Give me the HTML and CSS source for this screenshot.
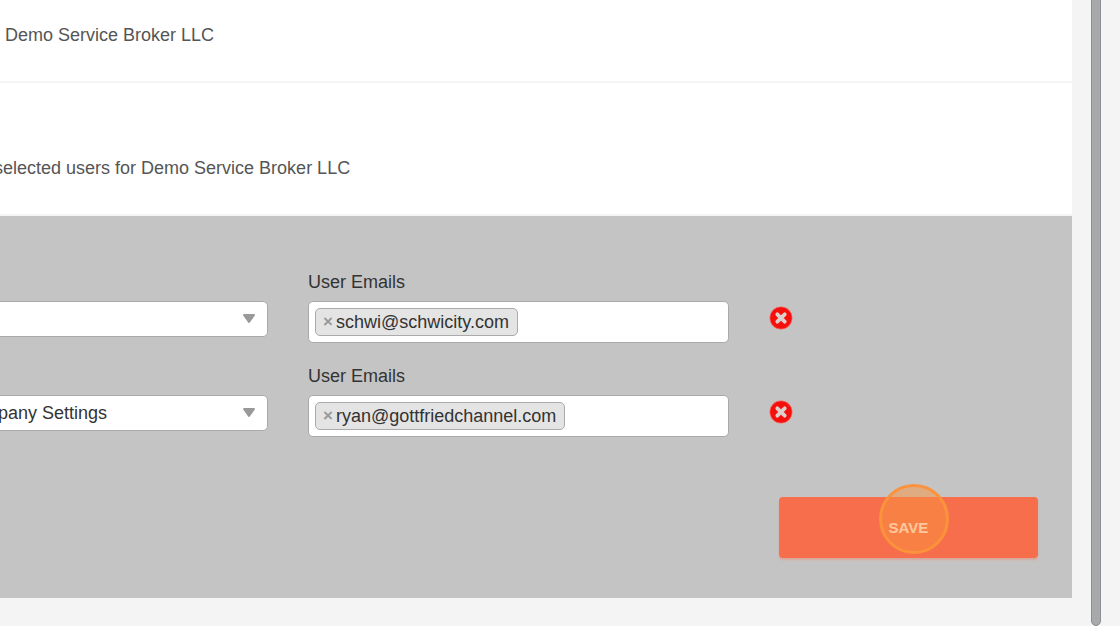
FILE: index.html
```html
<!DOCTYPE html>
<html lang="en">
  <head>
    <meta charset="utf-8">
    <title>Demo Service Broker LLC</title>
    <link rel="stylesheet" href="styles.css">
  </head>
  <body>
    <main>
      <section class="row">
        <p class="first">Demo Service Broker LLC</p>
      </section>
      <section class="row">
        <p>selected users for Demo Service Broker LLC</p>
      </section>
      <form class="panel">
        <div class="rule">
          <select class="setting" aria-label="Setting">
            <option></option>
          </select>
          <label for="emails1">User Emails</label>
          <div class="emails">
            <span class="tag"><button type="button">×</button>schwi@schwicity.com</span>
            <input id="emails1" type="text">
          </div>
          <button class="remove" type="button" aria-label="Remove">
            <svg viewBox="0 0 24 24">
              <circle cx="12" cy="12" r="11.2" fill="#f5100c" stroke="#f58580" stroke-width=".6" />
              <path d="M8.3 8.3l7.4 7.4M15.7 8.3l-7.4 7.4" stroke="#ddd0cc" stroke-width="3.8" stroke-linecap="round" />
            </svg>
          </button>
        </div>
        <div class="rule">
          <select class="setting" aria-label="Setting">
            <option>pany Settings</option>
          </select>
          <label for="emails2">User Emails</label>
          <div class="emails">
            <span class="tag"><button type="button">×</button>ryan@gottfriedchannel.com</span>
            <input id="emails2" type="text">
          </div>
          <button class="remove" type="button" aria-label="Remove">
            <svg viewBox="0 0 24 24">
              <circle cx="12" cy="12" r="11.2" fill="#f5100c" stroke="#f58580" stroke-width=".6" />
              <path d="M8.3 8.3l7.4 7.4M15.7 8.3l-7.4 7.4" stroke="#ddd0cc" stroke-width="3.8" stroke-linecap="round" />
            </svg>
          </button>
        </div>
        <button class="save" type="submit">SAVE<span class="click"></span></button>
      </form>
    </main>
    <div class="scroll"></div>
  </body>
</html>
```

FILE: styles.css
```css
* { box-sizing: border-box; }
body {
  display: flex;
  min-height: 100vh;
  margin: 0;
  overflow: hidden;
  background-color: #f4f4f4;
  color: #333;
  font: 18px/22px "Liberation Sans", Arial, sans-serif;
}
button, input, select { font: inherit; }
button { border: 0; padding: 0; cursor: pointer; }

/* content runs off the left edge of the window */
main {
  flex: 1;
  margin-left: -8px;
}
.row {
  background-color: #fff;
  border-bottom: 2px solid #f4f4f4;
  padding: 74px 0 35px 2px;
}
.row:first-child { padding: 24px 0 35px 13px; }
.row p {
  margin: 0;
  color: #555;
}

.panel {
  display: flex;
  flex-direction: column;
  gap: 22px;
  padding: 55px 0 40px;
  background-color: #c4c4c4;
}
.rule {
  display: grid;
  grid-template-columns: 276fr 421fr 303fr;
  gap: 8px 40px;
  align-items: start;
}
.rule label { grid-area: 1 / 2; }
.setting {
  grid-area: 2 / 1;
  appearance: none;
  width: 100%;
  height: 36px;
  padding: 0 40px 0 5px;
  border: 1px solid #aaa;
  border-radius: 5px;
  color: #333;
  background: #fff url("data:image/svg+xml,%3Csvg xmlns='http://www.w3.org/2000/svg' viewBox='0 0 14 10'%3E%3Cpath d='M2 1h10L7 8z' fill='%23999' stroke='%23999' stroke-width='2' stroke-linejoin='round'/%3E%3C/svg%3E") no-repeat right 11px top 12px / 14px 10px;
}
.emails {
  grid-area: 2 / 2;
  display: flex;
  gap: 5px;
  min-width: 0;
  padding: 6px;
  background-color: #fff;
  border: 1px solid #aaa;
  border-radius: 5px;
}
.emails input {
  flex: 1;
  min-width: 0;
  padding: 0;
  border: 0;
  outline: 0;
}
.tag {
  display: flex;
  align-items: center;
  gap: 3px;
  height: 28px;
  padding: 0 8px 0 7px;
  background-color: #e4e4e4;
  border: 1px solid #aaa;
  border-radius: 5px;
}
.tag button {
  background: none;
  color: #999;
  font-size: 17px;
  font-weight: bold;
}
.remove {
  grid-area: 2 / 3;
  width: 24px;
  height: 24px;
  margin-top: 5px;
  background: none;
}
.remove svg { display: block; }

.save {
  position: relative;
  align-self: flex-end;
  width: 24%;
  height: 61px;
  margin: 38px 34px 0 0;
  border-radius: 4px;
  background-color: #f66e4c;
  box-shadow: 0 2px 2px #d9a79b;
  color: #fff;
  font-size: 15px;
  font-weight: bold;
}
.click {
  position: absolute;
  top: -13px;
  left: 100px;
  width: 70px;
  height: 70px;
  border: 3px solid #fb923c;
  border-radius: 50%;
  background-color: rgba(251, 146, 60, .5);
}

.scroll {
  width: 10px;
  margin: -10px 19px 0;
  border: 1px solid #8b8e92;
  border-radius: 5px;
  background-color: #a8a9ab;
}
```
